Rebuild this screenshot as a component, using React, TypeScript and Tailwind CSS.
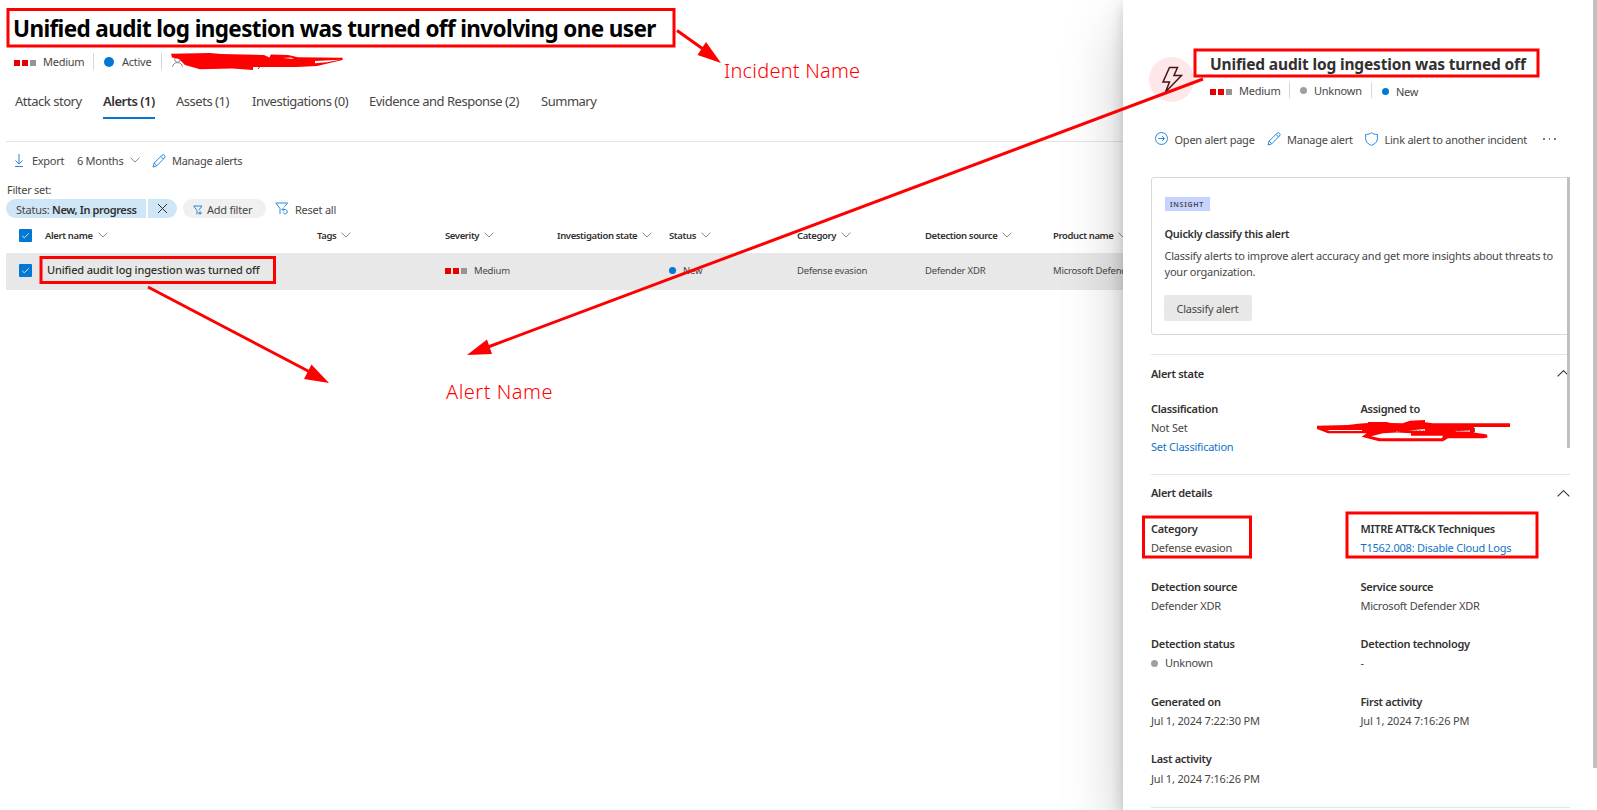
import type { ReactNode } from "react";

const sans = "font-['Noto_Sans','Open_Sans',sans-serif]";

function Chevron({ className = "" }: { className?: string }) {
  return (
    <svg className={`shrink-0 ${className}`} width="10" height="6" viewBox="0 0 10 6" fill="none" stroke="currentColor">
      <path d="M.5 .6 5 5.1 9.5 .6" />
    </svg>
  );
}

function Collapse({ className = "" }: { className?: string }) {
  return (
    <svg className={`shrink-0 ${className}`} width="13" height="7" viewBox="0 0 13 7" fill="none" stroke="#323130" strokeWidth="1.1">
      <path d="M.6 6.400 6.500.700 12.400 6.400" />
    </svg>
  );
}

function Severity({ className = "" }: { className?: string }) {
  return (
    <span className={`flex gap-[2px] ${className}`}>
      <i className="size-[6px] bg-[#e60000]" />
      <i className="size-[6px] bg-[#e60000]" />
      <i className="size-[6px] bg-[#979593]" />
    </span>
  );
}

function Pencil() {
  return (
    <svg className="shrink-0 text-[#2b88d8]" width="14" height="14" viewBox="0 0 14 14" fill="none" stroke="currentColor" strokeWidth="1">
      <path d="M1 13 2.1 9.1 9.9 1.3a1.7 1.7 0 0 1 2.6 2.6L4.8 11.8 1 13ZM8.9 2.4l2.6 2.6M2.2 9.1l2.6 2.6" />
    </svg>
  );
}

function Check() {
  return (
    <span className="flex size-[13px] items-center justify-center rounded-[1px] bg-[#0078d4]">
      <svg width="9" height="9" viewBox="0 0 9 9" fill="none" stroke="#d5e9f8">
        <path d="M1.2 4.8 3.3 6.8 7.8 2.4" />
      </svg>
    </span>
  );
}

const tabs = [
  { label: "Attack story", width: "w-[88px]" },
  { label: "Alerts (1)", width: "w-[73px]", active: true },
  { label: "Assets (1)", width: "w-[76px]" },
  { label: "Investigations (0)", width: "w-[117px]" },
  { label: "Evidence and Response (2)", width: "w-[172px]" },
  { label: "Summary", width: "w-[80px]" },
];

const columns = ["Alert name", "Tags", "Severity", "Investigation state", "Status", "Category", "Detection source", "Product name"];
const gridCols = "grid grid-cols-[39px_272px_128px_112px_112px_128px_128px_128px_120px]";

function Incident() {
  return (
    <main className="flex w-[1123px] shrink-0 flex-col overflow-hidden pl-[6px]">
      <h1 className="mt-[10px] h-[36px] pt-px pl-[7px] text-[22.5px] leading-[36px] font-bold tracking-[-0.62px] whitespace-nowrap text-black">
        Unified audit log ingestion was turned off involving one user
      </h1>
      <div className="mt-[7px] flex h-[17px] items-center pl-[8px] text-[11px] leading-[16px] tracking-[-0.26px]">
        <Severity className="mt-[3px]" />
        <span className="ml-[7px] w-[50px]">Medium</span>
        <i className="h-full w-px bg-[#d8d8d8]" />
        <i className="ml-[10px] size-[10px] rounded-full bg-[#0078d4]" />
        <span className="ml-[8px] w-[39px]">Active</span>
        <i className="h-full w-px bg-[#d8d8d8]" />
        <svg className="ml-[10px]" width="11" height="11" viewBox="0 0 11 11" fill="none" stroke="#8a8886">
          <circle cx="5.5" cy="3.5" r="2.8" />
          <path d="M.6 10.8c.5-5.6 9.300-5.600 9.800 0" />
        </svg>
      </div>
      <nav className="mt-[21px] flex h-[28px] pl-[9px] text-[13px] leading-[20px] tracking-[-0.48px]">
        {tabs.map((t) => (
          <div key={t.label} className={`${t.width} whitespace-nowrap`}>
            <span className={`inline-block h-[28px] ${t.active ? "border-b-2 border-[#0078d4] font-semibold tracking-[-0.5px] text-[#323130]" : ""}`}>{t.label}</span>
          </div>
        ))}
      </nav>
      <div className="mt-[22px] h-px shrink-0 bg-[#e5e5e5]" />
      <div className="mt-[10px] flex h-[17px] items-center pl-[8px] text-[11px] leading-[16px] tracking-[-0.28px]">
        <svg className="text-[#2b88d8]" width="10" height="13" viewBox="0 0 10 13" fill="none" stroke="currentColor">
          <path d="M5 0v10M1.500 6.500 5 10l3.500-3.500M1 12.500h8" />
        </svg>
        <span className="ml-[8px] w-[45px]">Export</span>
        <span className="w-[53px]">6 Months</span>
        <Chevron className="-mt-[2px] text-[#8a8886]" />
        <span className="ml-[12px] flex"><Pencil /></span>
        <span className="ml-[6px]">Manage alerts</span>
      </div>
      <div className="mt-[13px] h-[16px] pl-px text-[11px] leading-[16px] tracking-[-0.28px]">Filter set:</div>
      <div className="mt-[1px] flex h-[19px] items-stretch text-[11px] leading-[21px] tracking-[-0.24px] whitespace-nowrap">
        <span className="w-[140px] rounded-l-full bg-[#cfe6f7] pl-[10px]">
          Status: <b className="font-semibold tracking-[-0.38px] text-[#323130]">New, In progress</b>
        </span>
        <span className="ml-[2px] flex w-[29px] items-center rounded-r-full bg-[#cfe6f7] pl-[9px]">
          <svg width="11" height="11" viewBox="0 0 11 11" stroke="#323130"><path d="m1 1 9 9M10 1l-9 9" /></svg>
        </span>
        <span className="ml-[6px] flex w-[83px] rounded-full bg-[#f0f0f0] pl-[10px]">
          <svg className="mt-[6px] mr-[4px]" width="10" height="11" viewBox="0 0 10 11" fill="none" stroke="#2b88d8">
            <path d="M4 9.500V5.500L.7 1h8.300L6 5M5 8h4M7 6.200v3.600" />
          </svg>
          Add filter
        </span>
        <svg className="mt-[3px] ml-[9px]" width="14" height="14" viewBox="0 0 14 14" fill="none" stroke="#2b88d8">
          <path d="M5 12V6.500L.8 1h11.900L9.500 4.500M7.500 7.500h3a2.200 2.200 0 1 1-2.500 3M9 5.500l-2 2 2 2" />
        </svg>
        <span className="ml-[6px]">Reset all</span>
      </div>
      <div className={`${gridCols} mt-[4px] h-[31px] shrink-0 items-start pt-[6px] text-[9.5px] leading-[16px] font-semibold tracking-[-0.38px] text-[#323130]`}>
        <span className="mt-[1px] ml-[13px]"><Check /></span>
        {columns.map((c) => (
          <span key={c} className="flex items-center whitespace-nowrap">
            {c}
            <Chevron className="-mt-[2px] ml-[5px] text-[#8a8886]" />
          </span>
        ))}
      </div>
      <div className={`${gridCols} h-[37px] shrink-0 items-center bg-[#e8e8e8] pb-[2px] text-[9.5px] leading-[16px] tracking-[-0.2px] whitespace-nowrap`}>
        <span className="ml-[13px]"><Check /></span>
        <span className="pb-[2px] pl-[2px] text-[11px] font-medium tracking-[-0.15px] text-[#323130]">Unified audit log ingestion was turned off</span>
        <span />
        <span className="flex items-center gap-[7px]"><Severity />Medium</span>
        <span />
        <span className="flex items-center gap-[7px]"><i className="size-[7px] rounded-full bg-[#0078d4]" />New</span>
        <span>Defense evasion</span>
        <span>Defender XDR</span>
        <span>Microsoft Defender XDR</span>
      </div>
    </main>
  );
}

function Field({ label, children }: { label: string; children?: ReactNode }) {
  return (
    <div>
      <div className="h-[19px] font-semibold tracking-[-0.3px] text-[#323130]">{label}</div>
      <div className="h-[16px]">{children}</div>
    </div>
  );
}

function AlertPanel() {
  return (
    <aside className="relative z-10 flex w-[474px] shrink-0 flex-col bg-white pl-[28px] text-[11px] leading-[16px] tracking-[-0.24px] whitespace-nowrap shadow-[0_26px_58px_0_rgba(0,0,0,0.22),0_5px_14px_0_rgba(0,0,0,0.18)]">
      <header className="mt-[52px] flex h-[50px]">
        <div className="-ml-[2px] mt-[5px] flex size-[45px] items-center justify-center rounded-full bg-[#fde7e9]">
          <svg width="22" height="28" viewBox="0 0 22 28" fill="none" stroke="#4a1216" strokeWidth="1.500">
            <path d="M8.500 1.500h8l-3.500 8h7.500L4.500 26l4-10H2Z" />
          </svg>
        </div>
        <div className="ml-[16px]">
          <h2 className="h-[24px] text-[15.500px] leading-[24px] font-bold tracking-[-0.160px] text-[#323130]">Unified audit log ingestion was turned off</h2>
          <div className="mt-[6px] flex h-[16px] items-center">
            <Severity className="mt-[4px]" />
            <span className="mt-[2px] ml-[7px] w-[50px]">Medium</span>
            <i className="h-full w-px bg-[#d8d8d8]" />
            <i className="ml-[10px] size-[7px] rounded-full bg-[#a19f9d]" />
            <span className="mt-[2px] ml-[7px] w-[57px]">Unknown</span>
            <i className="h-full w-px bg-[#d8d8d8]" />
            <i className="mt-[2px] ml-[10px] size-[7px] rounded-full bg-[#0078d4]" />
            <span className="mt-[4px] ml-[7px]">New</span>
          </div>
        </div>
      </header>
      <div className="mt-[30px] flex h-[16px] items-center pl-[4px]">
        <svg className="-mt-[3px]" width="13" height="13" viewBox="0 0 13 13" fill="none" stroke="#2b88d8">
          <circle cx="6.500" cy="6.500" r="6" />
          <path d="M3.300 6.500h6M7 4l2.500 2.500L7 9" />
        </svg>
        <span className="ml-[6.500px] w-[92.500px]">Open alert page</span>
        <span className="-mt-[3px] flex"><Pencil /></span>
        <span className="ml-[6px] w-[78px]">Manage alert</span>
        <svg className="-mt-[3px]" width="13" height="14" viewBox="0 0 13 14" fill="none" stroke="#2b88d8">
          <path d="M6.500.700C5 2 3 2.500.600 2.500v4.300c0 3 2.500 5.200 5.900 6.600 3.400-1.400 5.900-3.600 5.900-6.600V2.500C10 2.500 8 2 6.500.700Z" />
        </svg>
        <span className="ml-[6.500px] w-[158.500px]">Link alert to another incident</span>
        <span className="-mt-[2px] flex gap-[4px]">
          <i className="size-[1.500px] bg-[#797775]" />
          <i className="size-[1.500px] bg-[#797775]" />
          <i className="size-[1.500px] bg-[#797775]" />
        </span>
      </div>

      <section className="mt-[29px] h-[158px] w-[419px] shrink-0 rounded-l-[3px] border border-[#d9d9d9] pt-[19px] pl-[12.500px]">
        <div className="flex h-[14px] w-[45px] items-center justify-center bg-[#c7d3ff] pt-px text-[7px] font-semibold tracking-[0.700px] text-[#484644]">INSIGHT</div>
        <div className="mt-[15px] font-semibold tracking-[-0.300px] text-[#323130]">Quickly classify this alert</div>
        <p className="mt-[6px] tracking-[-0.220px]">
          Classify alerts to improve alert accuracy and get more insights about threats to
          <br />
          your organization.
        </p>
        <button className="mt-[15px] -ml-px h-[26px] w-[88px] rounded-[2px] bg-[#e8e8e8] pt-[2px]">Classify alert</button>
      </section>

      <section className="mt-[19px] h-[120px] w-[419px] border-t border-[#e5e5e5] pt-[11px]">
        <div className="flex h-[16px] items-center justify-between font-semibold tracking-[-0.300px] text-[#323130]">
          Alert state
          <Collapse className="-mt-[2px]" />
        </div>
        <div className="mt-[19px] grid grid-cols-[209.500px_1fr]">
          <Field label="Classification">Not Set</Field>
          <Field label="Assigned to" />
        </div>
        <div className="mt-[3px] text-[#0f74c8]">Set Classification</div>
      </section>

      <section className="h-[334px] w-[419px] shrink-0 border-y border-[#e5e5e5] pt-[10px]">
        <div className="flex h-[16px] items-center justify-between font-semibold tracking-[-0.300px] text-[#323130]">
          Alert details
          <Collapse />
        </div>
        <div className="mt-[20px] grid grid-cols-[209.500px_1fr] auto-rows-[57.500px]">
          <Field label="Category">Defense evasion</Field>
          <Field label="MITRE ATT&CK Techniques"><span className="tracking-[-0.220px] text-[#0f74c8]">T1562.008: Disable Cloud Logs</span></Field>
          <Field label="Detection source">Defender XDR</Field>
          <Field label="Service source">Microsoft Defender XDR</Field>
          <Field label="Detection status">
            <span className="flex items-center gap-[7px]"><i className="size-[7px] rounded-full bg-[#a19f9d]" />Unknown</span>
          </Field>
          <Field label="Detection technology">-</Field>
          <Field label="Generated on"><span className="tracking-[-0.170px]">Jul 1, 2024 7:22:30 PM</span></Field>
          <Field label="First activity"><span className="tracking-[-0.170px]">Jul 1, 2024 7:16:26 PM</span></Field>
          <Field label="Last activity"><span className="block pt-px tracking-[-0.170px]">Jul 1, 2024 7:16:26 PM</span></Field>
        </div>
      </section>
      <i className="absolute top-[177px] left-[444px] h-[271px] w-[3px] bg-[#c0c0c0]" />
      <i className="absolute top-0 right-0 h-[768px] w-[4px] bg-[#c1c1c1]" />
    </aside>
  );
}

function Annotations() {
  return (
    <>
      <svg className="pointer-events-none absolute inset-0 z-20" width="1597" height="810" fill="none" stroke="#f00" strokeWidth="3">
        <rect x="8" y="9.500" width="666" height="36.500" />
        <rect x="41" y="257.500" width="233.500" height="25" />
        <rect x="1195" y="50" width="343" height="26" />
        <rect x="1143.500" y="517" width="107" height="40" />
        <rect x="1347" y="513" width="190" height="44" />
        <path d="M677 30.500 703 49M148 287l162 85M1203 79 488 347" />
        <path fill="#f00" stroke="none" d="m721 63-23.500-8 8.500-13ZM329 383l-25-4 7.500-14.500ZM467 355l20-15.500 5 14.500Z" />
        <path fill="#f00" stroke="none" d="M171 53.700 197 53.300 210 53 221 54 264 55 269.500 57.600 270.700 54.500 288 55 298 57.300 342.600 57.700V60L317 66 297 67H253V70L232 68.500 200 69.300 185 65 179 59 172 57.500Z" />
        <path fill="#fff" stroke="none" d="M315 61 340 59.700 327 62.300 315 63.300ZM283 58l8-.5 3 1.500Z" />
        <path stroke="#484644" strokeWidth="1" d="m259.500 67-1.500 2" />
        <path
          fill="#f00"
          stroke="none"
          d="M1317 425.700 1348 425 1358 423.700 1368 423V422H1387L1390 423 1402.700 423.300 1410 420.700 1425 420V422.300L1433 423.300H1510V427H1474V432.500L1487 434.500 1487.500 437.500 1483 438.300H1448L1443 441.300H1379L1361.700 436.700 1366.700 433.300H1328L1317 429Z"
        />
        <path fill="#fff" stroke="none" d="M1327 430h35v1h-32ZM1371 436.300 1383 433.300 1397 432.500 1411 433.300V435.700H1443L1442 438.300H1380ZM1409 430.500l16-1.500v2ZM1454 431.300l16-.8v1.200Z" />
        <path stroke="#a19f9d" strokeWidth="1" strokeDasharray="2 1.500" d="M1412 430.500h13M1456 431.300h14M1396 431.800h4" />
        <path stroke="#605e5c" strokeWidth="1" d="M1474.500 428v4" />
      </svg>
      <div className="absolute top-[57px] left-[724px] z-20 text-[20px] leading-[28px] font-[350] tracking-[0.220px] whitespace-nowrap text-[#f00]">Incident Name</div>
      <div className="absolute top-[378px] left-[446px] z-20 text-[20px] leading-[28px] font-[350] tracking-[0.500px] whitespace-nowrap text-[#f00]">Alert Name</div>
    </>
  );
}

export default function App() {
  return (
    <div className={`${sans} relative flex h-[810px] w-[1597px] overflow-hidden bg-white text-[#484644]`}>
      <Incident />
      <AlertPanel />
      <Annotations />
    </div>
  );
}
